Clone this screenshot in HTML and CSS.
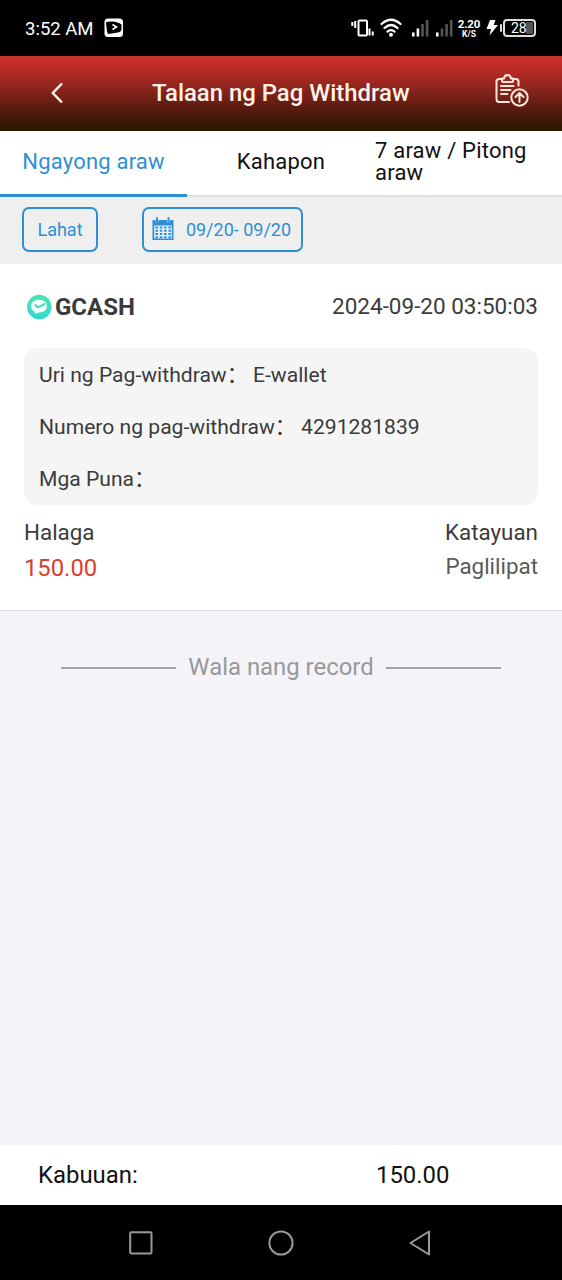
FILE: index.html
```html
<!DOCTYPE html>
<html lang="fil">
<head>
<meta charset="utf-8">
<title>Talaan ng Pag Withdraw</title>
<link rel="stylesheet" href="styles.css">
</head>
<body>
<div class="status">
  <span class="clock">3:52 AM</span>
  <svg class="app-icon" width="20" height="20" viewBox="0 0 20 20"><rect x=".5" y=".5" width="18.5" height="18.5" rx="3.5" fill="#fff"/><path d="M2 4.200Q8 2.600 15 5L17.500 6.500V12Q16.500 14 14 14.500L4 16Q2.500 13 2 4.200Z" fill="#000"/><path d="m8.500 6.500 4 2.500-4 2.500" fill="none" stroke="#fff" stroke-width="1.600"/></svg>
  <svg class="status-icons" width="107" height="24" viewBox="0 0 107 24">
    <g fill="none" stroke="#fff" stroke-width="2">
      <rect x="7.500" y="4.500" width="8.500" height="15" rx="1"/>
      <path d="M1.300 6v4M4.200 5v7M18.500 12.500v7M21.700 15.500v4"/>
      <g stroke-linecap="round" stroke-width="2.200"><path d="M30.500 8q9.500-8.500 19 0M33.500 12q6.500-6 13 0M36.500 15.700q3.500-3 7 0"/></g>
    </g>
    <circle cx="40" cy="18.800" r="2" fill="#fff"/>
    <g fill="#fff"><path d="M61 16.500h2.600v4H61zM65.600 12.500h2.600v8h-2.600zM85 16.500h2.600v4H85z"/></g>
    <g fill="#555"><path d="M70.200 8h2.600v12.500h-2.600zM74.800 4h2.600v16.500h-2.600zM89.700 12.500h2.600v8h-2.600zM94.300 8h2.600v12.500h-2.600zM98.900 4h2.600v16.500h-2.600z"/></g>
  </svg>
  <span class="speed"><b>2.20</b><b>K/S</b></span>
  <svg class="bolt" width="12" height="16" viewBox="0 0 12 16"><path d="M4 0h5.500L7.700 5H12L3.500 15.500 5 9H.5Z" fill="#fff"/></svg>
  <span class="nub"></span>
  <span class="battery"><span class="level">28</span></span>
</div>
<header class="header">
  <svg class="back" width="14" height="22" viewBox="0 0 14 22"><path d="m12 1.500-9.200 9.500 9.200 9.500" fill="none" stroke="#fff3e8" stroke-width="2.500"/></svg>
  <h1>Talaan ng Pag Withdraw</h1>
  <svg class="records" width="34" height="34" viewBox="0 0 34 34" fill="none" stroke="#ffe8dc" stroke-width="2" stroke-linecap="round" stroke-linejoin="round">
    <path d="M7 5H4Q1.500 5 1.500 7.500V25Q1.500 28 4 28H14M18 5h3q2.500 0 2.500 2.500v4"/>
    <path d="M7 7V4.500h2Q9.500 1 12.500 1T16 4.500h2V7q0 1-1 1H8Q7 8 7 7ZM6 12h12.500M6 16h9.500M6 20h6.500"/>
    <circle cx="24.500" cy="23.500" r="8.200"/>
    <path d="M24.500 28v-8.500m-4 3.500 4-4 4 4"/>
  </svg>
</header>
<nav class="tabs">
  <a class="tab active">Ngayong araw</a>
  <a class="tab">Kahapon</a>
  <a class="tab wide">7 araw / Pitong araw</a>
</nav>
<div class="filters">
  <button class="filter all">Lahat</button>
  <button class="filter date">
    <svg width="22" height="24" viewBox="0 0 22 24"><path d="M.5 3h3v1.500q1.500 3 3 0V3h8.500v1.500q1.500 3 3 0V3h3.500v20H.5Z" fill="#2f8fd5"/><path d="M5 1v4M16.500 1v4" stroke="#2f8fd5" stroke-width="2" stroke-linecap="round"/><path d="M2.200 8.500h17.600v13H2.200z" fill="#e9f3f8"/><path d="M3.500 10.500h15.500M3.500 13.800h15.500M3.500 17h15.500M3.500 20.200h15.500" stroke="#2f8fd5" stroke-width="2" stroke-dasharray="2.500 1.800"/></svg>
    <span>09/20- 09/20</span>
  </button>
</div>
<main class="content">
  <section class="card">
    <div class="card-head">
      <svg width="26" height="26" viewBox="0 0 26 26"><defs><linearGradient id="mint" x2="0" y2="1"><stop stop-color="#49e5b3"/><stop offset="1" stop-color="#30d9cb"/></linearGradient></defs><circle cx="13.300" cy="13" r="12.200" fill="url(#mint)"/><path d="M13 5.800c4.600 0 8 2.600 8 6.300s-3.400 6.500-8 6.500l-4 1.300-.4-2C6.300 16.800 5 14.500 5 12.100c0-3.700 3.400-6.300 8-6.300Z" fill="#f3fffb"/><path d="m8.800 10.500 3 2.800 7.500-3.800" fill="none" stroke="#35d9b9" stroke-width="1.800"/></svg>
      <strong>GCASH</strong>
      <time>2024-09-20 03:50:03</time>
    </div>
    <div class="details">
      <p>Uri ng Pag-withdraw： E-wallet</p>
      <p>Numero ng pag-withdraw： 4291281839</p>
      <p>Mga Puna：</p>
    </div>
    <div class="summary">
      <div><p>Halaga</p><p class="amount">150.00</p></div>
      <div class="right"><p>Katayuan</p><p class="state">Paglilipat</p></div>
    </div>
  </section>
  <div class="end"><i></i><span>Wala nang record</span><i></i></div>
</main>
<footer class="total"><span>Kabuuan:</span><span class="sum">150.00</span></footer>
<div class="navbar">
  <svg width="28" height="28" viewBox="0 0 28 28"><rect x="3.200" y="3.200" width="21.300" height="21.300" rx="1"/></svg>
  <svg width="28" height="28" viewBox="0 0 28 28"><circle cx="14" cy="14" r="11.600"/></svg>
  <svg width="28" height="28" viewBox="0 0 28 28"><path d="M22 2.500v23L3.500 14Z"/></svg>
</div>
</body>
</html>
```
FILE: styles.css
```css
* { box-sizing: border-box; }
body { margin: 0; width: 562px; height: 1280px; display: flex; flex-direction: column; overflow: hidden; font-family: Roboto, "Noto Sans CJK SC", sans-serif; font-size: 22px; color: #111; background: #f3f3f8; }
p, h1 { margin: 0; }
svg { display: block; flex: none; }
.status { height: 56px; flex: none; background: #000; color: #fff; display: flex; align-items: center; padding-left: 25px; }
.clock { width: 79px; font-size: 18.500px; line-height: 22px; white-space: nowrap; padding-top: 1px; }
.status-icons { margin-left: 227px; }
.speed { width: 24px; margin-left: -1px; display: flex; flex-direction: column; align-items: center; font-size: 11.500px; line-height: 12px; letter-spacing: -.2px; }
.speed b + b { font-size: 8.500px; line-height: 9px; letter-spacing: 0; }
.bolt { margin-left: 5px; }
.nub { width: 2px; height: 8px; margin-left: 2px; border-radius: 1px; background: #ddd; }
.battery { margin-left: 1px; width: 33px; height: 18px; border: 2px solid #ddd; border-radius: 4px; font-size: 14px; padding: 1px; }
.level { display: block; height: 12px; line-height: 13px; padding-left: 5px; background: linear-gradient(90deg, #000 20px, #555 20px); }
.header { height: 75px; flex: none; display: flex; align-items: center; background: linear-gradient(#cb332c 0%, #bd2c26 16%, #7b2119 52%, #46190a 80%, #291900 100%); color: #fff3e8; }
.back { margin: -2px 0 0 50px; }
h1 { margin: -2px 0 0 88px; width: 260px; font-size: 23.900px; font-weight: 500; line-height: 30px; white-space: nowrap; }
.records { margin-left: 83px; margin-top: -5px; }
.tabs { height: 66px; flex: none; display: flex; background: #fff; border-bottom: 2px solid #dedede; }
.tab { width: 187px; height: 66px; display: flex; align-items: center; justify-content: center; padding: 0 0 4px 1px; line-height: 22px; letter-spacing: .2px; }
.tab.active { color: #2f8fd5; border-bottom: 3px solid #2f8fd5; padding: 0 0 1px; }
.tab.wide { padding: 0 20px 4px 1px; justify-content: flex-start; width: 188px; }
.filters { height: 67px; flex: none; background: #efefef; padding: 10px 22px; display: flex; gap: 44px; align-items: flex-start; }
.filter { height: 45px; padding: 0; border: 2px solid #2f8fd5; border-radius: 7px; background: transparent; color: #2f8fd5; font: 18px Roboto, sans-serif; display: flex; align-items: center; justify-content: center; }
.all { width: 76px; }
.date { width: 161px; gap: 12px; padding: 0 2px 1px 0; }
.content { flex: 1; }
.card { height: 347px; background: #fff; border-bottom: 1px solid #dddde1; padding: 26px 24px 0; color: #3b3b3b; }
.card-head { height: 34px; display: flex; align-items: center; padding-left: 2px; }
.card-head strong { margin-left: 3px; font-size: 24px; }
.card-head time { margin: -2px 0 0 auto; font-size: 22.500px; }
.details { margin-top: 24px; height: 157px; border-radius: 14px; background: #f5f5f5; padding: 1px 0 0 15px; font-size: 21.100px; line-height: 52px; white-space: nowrap; }
.summary { display: flex; justify-content: space-between; margin-top: 10px; line-height: 35px; font-size: 22.400px; }
.right { text-align: right; }
.amount { color: #d8402c; font-size: 23.800px; line-height: 36px; }
.state { color: #5a5a5a; line-height: 33px; }
.end { display: flex; align-items: center; justify-content: center; gap: 12px; margin-top: 41px; line-height: 30px; font-size: 23.900px; color: #999; white-space: nowrap; }
.end i { width: 115px; height: 2px; margin-top: 2px; background: #a4a4a8; }
.total { height: 60px; flex: none; display: flex; align-items: center; background: #fff; padding-left: 38px; font-size: 23.900px; }
.total span { width: 338px; }
.total .sum { width: auto; }
.navbar { height: 75px; flex: none; background: #000; display: flex; align-items: center; gap: 112px; padding-left: 127px; }
.navbar svg { fill: none; stroke: #999; stroke-width: 2; stroke-linejoin: round; }
```
